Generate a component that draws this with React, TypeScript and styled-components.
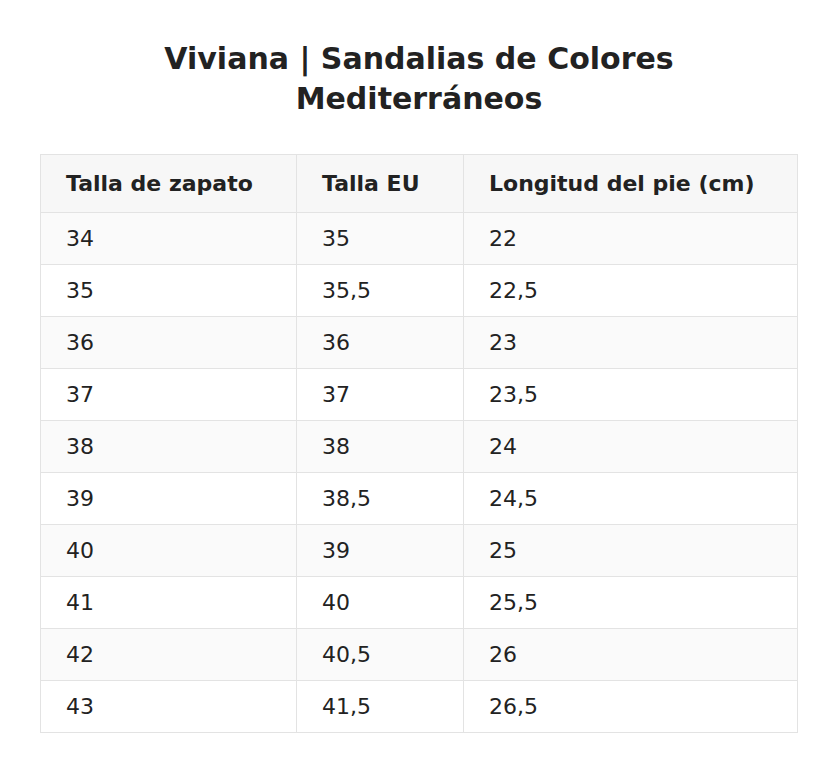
import React from "react"
import styled, { createGlobalStyle } from "styled-components"

const GlobalStyle = createGlobalStyle`
  body {
    margin: 0;
    background: #ffffff;
    font-family: "DejaVu Sans", "Liberation Sans", sans-serif;
    color: #222222;
  }
`

const Page = styled.main`
  padding: 39px 40px 40px;
`

const Title = styled.h1`
  margin: 0 0 35px;
  text-align: center;
  font-size: 30px;
  line-height: 40px;
  font-weight: bold;
  color: #222222;
`

const Table = styled.table`
  width: 100%;
  border-collapse: collapse;
  font-size: 22px;
`

const Column = styled.col<{ $width?: number }>`
  width: ${({ $width }) => ($width ? `${$width}px` : "auto")};
`

const HeadCell = styled.th`
  padding: 16px 25px;
  line-height: 25px;
  text-align: left;
  font-weight: bold;
  background: #f7f7f7;
  border: 1px solid #e3e3e3;
`

const Row = styled.tr<{ $striped: boolean }>`
  background: ${({ $striped }) => ($striped ? "#fafafa" : "#ffffff")};
`

const Cell = styled.td`
  padding: 13px 25px;
  line-height: 25px;
  border: 1px solid #e3e3e3;
`

const rows = [
  ["34", "35", "22"],
  ["35", "35,5", "22,5"],
  ["36", "36", "23"],
  ["37", "37", "23,5"],
  ["38", "38", "24"],
  ["39", "38,5", "24,5"],
  ["40", "39", "25"],
  ["41", "40", "25,5"],
  ["42", "40,5", "26"],
  ["43", "41,5", "26,5"],
]

export default function App() {
  return (
    <Page>
      <GlobalStyle />
      <Title>
        Viviana | Sandalias de Colores
        <br />
        Mediterráneos
      </Title>
      <Table>
        <colgroup>
          <Column $width={256} />
          <Column $width={167} />
          <Column />
        </colgroup>
        <thead>
          <tr>
            <HeadCell>Talla de zapato</HeadCell>
            <HeadCell>Talla EU</HeadCell>
            <HeadCell>Longitud del pie (cm)</HeadCell>
          </tr>
        </thead>
        <tbody>
          {rows.map((row, i) => (
            <Row key={row[0]} $striped={i % 2 === 0}>
              {row.map((value, j) => (
                <Cell key={j}>{value}</Cell>
              ))}
            </Row>
          ))}
        </tbody>
      </Table>
    </Page>
  )
}
